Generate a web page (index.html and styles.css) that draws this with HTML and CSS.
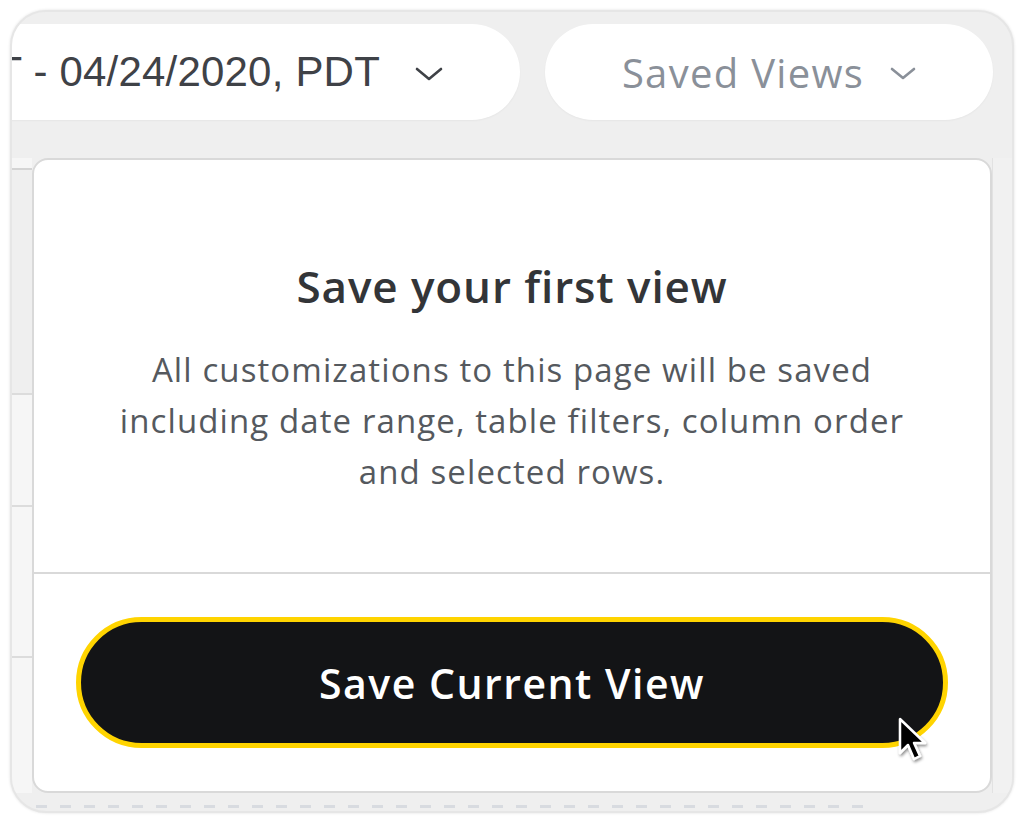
FILE: index.html
```html
<!DOCTYPE html>
<html lang="en">
<head>
    <meta charset="UTF-8">
    <title>Saved Views</title>
    <link rel="stylesheet" href="styles.css">
</head>
<body>
    <div class="frame">
        <div class="toolbar">
            <button class="pill date-pill">
                <span class="date-text">T - 04/24/2020, PDT</span>
                <svg class="chevron" width="28" height="15" viewBox="0 0 28 15"><path d="M2 2 L14 12 L26 2" fill="none" stroke="currentColor" stroke-width="2.6" stroke-linecap="round" stroke-linejoin="round"/></svg>
            </button>
            <button class="pill views-pill">
                <span>Saved Views</span>
                <svg class="chevron" width="26" height="14" viewBox="0 0 26 14"><path d="M2 2 L13 11 L24 2" fill="none" stroke="currentColor" stroke-width="2.6" stroke-linecap="round" stroke-linejoin="round"/></svg>
            </button>
        </div>

        <div class="content">
            <div class="table-edge">
                <div class="edge-row first"></div>
                <div class="edge-row tall"></div>
                <div class="edge-row"></div>
                <div class="edge-row mid"></div>
                <div class="edge-row"></div>
            </div>

            <div class="panel">
                <div class="panel-body">
                    <h2>Save your first view</h2>
                    <p>All customizations to this page will be saved<br>including date range, table filters, column order<br>and selected rows.</p>
                </div>
                <div class="panel-footer">
                    <button class="save-btn">Save Current View</button>
                    <svg class="cursor" width="36" height="52" viewBox="0 0 36 52">
                        <defs>
                            <filter id="cs" x="-40%" y="-40%" width="180%" height="180%">
                                <feDropShadow dx="1" dy="2" stdDeviation="1.6" flood-color="#000" flood-opacity="0.45"/>
                            </filter>
                        </defs>
                        <path d="M4 3 L4 37 L12 29 L18 43 L24 40 L18 27 L29 27 Z" fill="#000" stroke="#fff" stroke-width="2.5" stroke-linejoin="round" filter="url(#cs)"/>
                    </svg>
                </div>
            </div>

            <div class="side-edge"></div>
        </div>

        <div class="dashes"></div>
    </div>
</body>
</html>
```

FILE: styles.css
```css
* {
    margin: 0;
    padding: 0;
    box-sizing: border-box;
}

body {
    background: #ffffff;
    font-family: 'Open Sans', Lato, sans-serif;
}

.frame {
    margin: 10px;
    width: 1004px;
    height: 803px;
    background: #efefef;
    border: 2px solid #e6e6e6;
    border-radius: 36px;
    box-shadow: 0 0 3px rgba(0, 0, 0, 0.12);
    overflow: hidden;
}

.toolbar {
    display: flex;
    gap: 25px;
    padding-top: 12px;
}

.pill {
    height: 96px;
    background: #ffffff;
    border: none;
    border-radius: 48px;
    display: flex;
    align-items: center;
    box-shadow: 0 1px 2px rgba(0, 0, 0, 0.04);
}

.date-pill {
    width: 560px;
    margin-left: -52px;
    justify-content: flex-end;
    padding-right: 77px;
    gap: 35px;
    color: #3f4247;
}

.date-text {
    font-family: 'Liberation Sans', Arial, sans-serif;
    font-size: 42px;
    letter-spacing: 0.2px;
}

.views-pill {
    width: 448px;
    justify-content: center;
    gap: 26px;
    color: #8a9099;
    font-family: 'Open Sans', sans-serif;
    font-size: 40px;
    letter-spacing: 1.3px;
}

.chevron {
    display: block;
    margin-top: 4px;
}

.content {
    display: flex;
    margin-top: 38px;
}

.table-edge {
    width: 20px;
    background: #f6f6f6;
    padding-top: 10px;
}

.edge-row {
    height: 112px;
    border-top: 2px solid #dcdcdc;
}

.edge-row.first {
    height: 0;
    border-top-color: #d4d4d4;
}

.edge-row.tall {
    height: 223px;
    border-top: none;
    background: #efefef;
}

.edge-row.mid {
    height: 151px;
}

.panel {
    width: 960px;
    height: 635px;
    background: #ffffff;
    border: 2px solid #d9d9d9;
    border-radius: 16px;
    display: flex;
    flex-direction: column;
}

.panel-body {
    height: 414px;
    border-bottom: 2px solid #d9d9d9;
    text-align: center;
    padding-top: 98px;
}

.panel-body h2 {
    font-size: 44px;
    font-weight: 600;
    color: #333538;
    line-height: 56px;
    letter-spacing: 0.9px;
}

.panel-body p {
    margin-top: 30px;
    font-size: 33px;
    line-height: 51px;
    color: #55595e;
    letter-spacing: 1.1px;
}

.panel-footer {
    flex: 1;
    display: flex;
    align-items: center;
    padding: 0 42px;
    position: relative;
}

.save-btn {
    width: 100%;
    height: 131px;
    background: #131416;
    border: 5px solid #ffd400;
    border-radius: 66px;
    color: #ffffff;
    font-family: 'Open Sans', sans-serif;
    font-size: 41px;
    font-weight: 600;
    letter-spacing: 1.5px;
}

.cursor {
    position: absolute;
    left: 862px;
    top: 142px;
}

.side-edge {
    flex: 1;
    border-left: 1px solid #e2e2e2;
    background: #f1f1f1;
}

.dashes {
    margin: 12px 0 0 24px;
    width: 836px;
    height: 3px;
    background: repeating-linear-gradient(90deg, #d8dbe0 0 11px, transparent 11px 24px);
}
```
